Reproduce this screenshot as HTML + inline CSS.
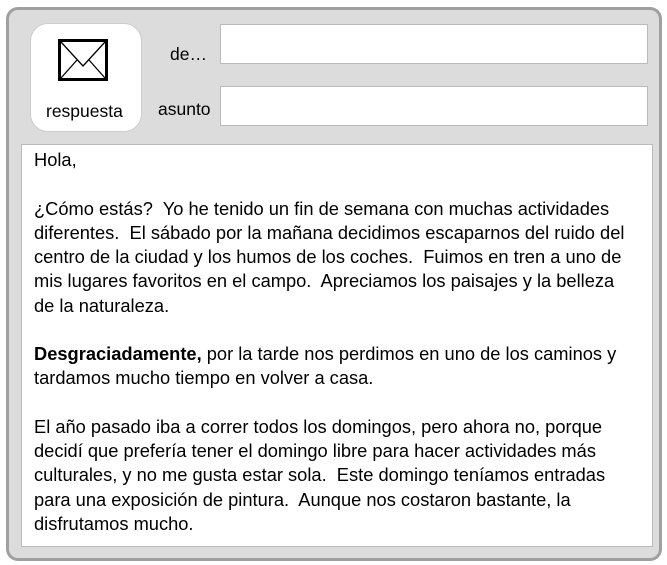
<!DOCTYPE html><html><head><style>
body{margin:0;width:667px;height:565px;background:#fff;font-family:"Liberation Sans",sans-serif;color:#000}
.outer{position:absolute;left:6px;top:7px;width:650px;height:548px;border:3px solid #a0a0a0;border-radius:12px;background:#dcdcdc}
.btn{position:absolute;left:30px;top:23px;width:112px;height:109px;background:#fff;border-radius:18px;border:1px solid #ccc;box-sizing:border-box}
.lbl{position:absolute;font-size:17.5px}
.inp{position:absolute;left:220px;width:428px;height:40px;background:#fff;border:1px solid #bbb;box-sizing:border-box}
.ta{position:absolute;left:21px;top:144px;width:632px;height:403px;background:#fff;border:1px solid #bbb;box-sizing:border-box;padding:3px 12px;font-size:18.3px;line-height:24.27px;white-space:nowrap}
p{margin:0 0 24.27px}
</style></head><body>
<div class="outer"></div>
<div class="btn">
<svg style="position:absolute;left:27px;top:15px" width="50" height="42" viewBox="0 0 50 42"><rect x="1.5" y="1.5" width="47" height="39" fill="#fff" stroke="#000" stroke-width="3"/><path d="M3 3 L25 27 L47 3 M3 39 L19 21 M47 39 L31 21" fill="none" stroke="#000" stroke-width="1.3"/></svg>
<div class="lbl" style="left:15px;top:77px">respuesta</div>
</div>
<div class="lbl" style="left:170px;top:44px">de…</div>
<div class="lbl" style="left:158px;top:99px">asunto</div>
<div class="inp" style="top:24px"></div>
<div class="inp" style="top:86px"></div>
<div class="ta">
<p>Hola,</p>
<p>¿Cómo estás?&nbsp; Yo he tenido un fin de semana con muchas actividades<br>diferentes.&nbsp; El sábado por la mañana decidimos escaparnos del ruido del<br>centro de la ciudad y los humos de los coches.&nbsp; Fuimos en tren a uno de<br>mis lugares favoritos en el campo.&nbsp; Apreciamos los paisajes y la belleza<br>de la naturaleza.</p>
<p><b>Desgraciadamente,</b> por la tarde nos perdimos en uno de los caminos y<br>tardamos mucho tiempo en volver a casa.</p>
<p>El año pasado iba a correr todos los domingos, pero ahora no, porque<br>decidí que prefería tener el domingo libre para hacer actividades más<br>culturales, y no me gusta estar sola.&nbsp; Este domingo teníamos entradas<br>para una exposición de pintura.&nbsp; Aunque nos costaron bastante, la<br>disfrutamos mucho.</p>
</div>
</body></html>
